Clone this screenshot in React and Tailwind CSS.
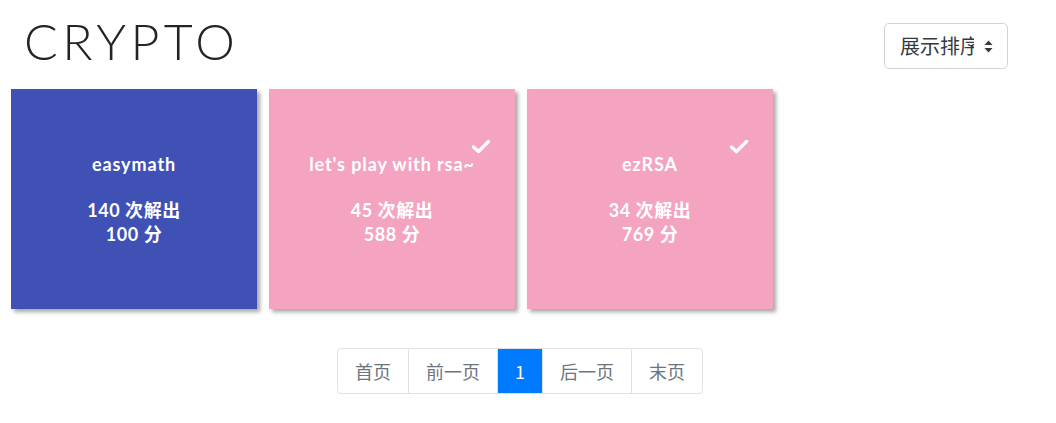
import React from 'react';

const challenges = [
  { name: 'easymath', solves: 140, score: 100, solved: false },
  { name: "let's play with rsa~", solves: 45, score: 588, solved: true },
  { name: 'ezRSA', solves: 34, score: 769, solved: true },
];

const pages = ['首页', '前一页', '1', '后一页', '末页'];

const Check = () => (
  <svg width="20" height="15" viewBox="0 0 20 15" className="absolute right-[24px] top-[50px]">
    <path d="M2.5 8 L7.5 12.5 L17.5 2.5" fill="none" stroke="white" strokeWidth="3.4" strokeLinecap="round" strokeLinejoin="round" />
  </svg>
);

const App = () => {
  return (
    <div className="min-h-[423px] bg-white font-['Lato','Noto_Sans_CJK_SC',sans-serif]">
      {/* Header */}
      <div className="flex items-start justify-between pl-[24px] pr-[48px] pt-[14px]">
        <h1 className="text-[50px] leading-[54px] font-light tracking-[0.09em] text-[#212529] font-['Lato',sans-serif]">CRYPTO</h1>
        <button className="mt-[9px] flex h-[46px] w-[124px] items-center rounded-[5px] border border-[#ced4da] bg-white pl-[15px] pr-[14px] text-[20px] text-[#343a40] font-['Noto_Sans_CJK_SC',sans-serif]">
          <span className="w-[74px] overflow-hidden whitespace-nowrap text-left">展示排序</span>
          <svg width="9" height="13" viewBox="0 0 9 13" className="ml-auto">
            <path d="M4.5 0.5 L8.5 5 L0.5 5 Z M4.5 12.5 L8.5 8 L0.5 8 Z" fill="#343a40" />
          </svg>
        </button>
      </div>

      {/* Cards */}
      <div className="mt-[20px] flex gap-[12px] pl-[11px]">
        {challenges.map((c) => (
          <div
            key={c.name}
            className={`relative flex h-[220px] w-[246px] flex-col items-center justify-center text-white shadow-[3px_3px_4px_rgba(0,0,0,0.35)] ${
              c.solved ? 'bg-[#f4a4c0]' : 'bg-[#3f51b5]'
            }`}
          >
            {c.solved && <Check />}
            <p className="text-[18px] font-bold leading-[24px] tracking-[0.05em]">{c.name}</p>
            <p className="mt-[22px] text-[18px] font-bold leading-[24px] tracking-[0.03em]">{c.solves} 次解出</p>
            <p className="text-[18px] font-bold leading-[24px] tracking-[0.03em]">{c.score} 分</p>
          </div>
        ))}
      </div>

      {/* Pagination */}
      <div className="mt-[39px] flex justify-center pr-[16px]">
        <div className="flex h-[46px] overflow-hidden rounded-[4px] border border-[#dee2e6] text-[18px] font-['Noto_Sans_CJK_SC',sans-serif]">
          {pages.map((p, i) => (
            <div
              key={p}
              className={`flex items-center px-[17px] ${i > 0 ? 'border-l border-[#dee2e6]' : ''} ${
                p === '1' ? 'border-[#007bff] bg-[#007bff] text-white' : 'text-[#6c757d]'
              }`}
            >
              {p}
            </div>
          ))}
        </div>
      </div>
    </div>
  );
};

export default App;
